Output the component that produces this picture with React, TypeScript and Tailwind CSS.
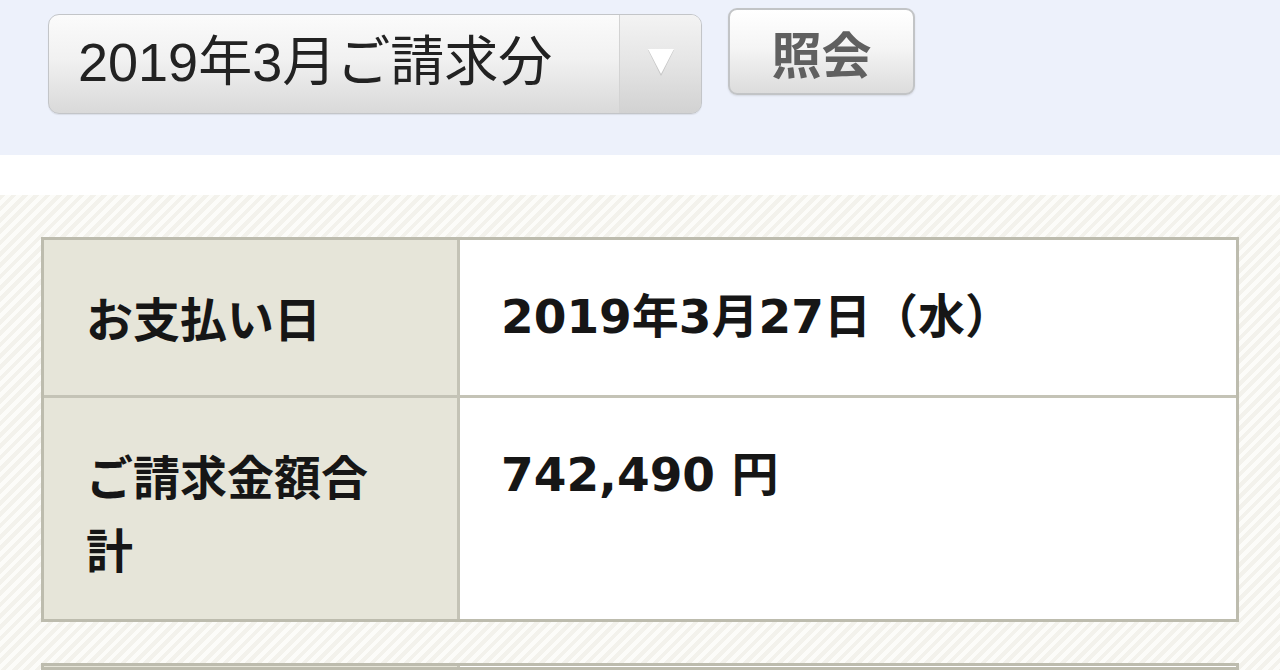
import React from "react";

const cjk = "font-['Noto_Sans_CJK_JP',sans-serif]";

function Row({
  label,
  value,
  last,
  pb,
}: {
  label: string;
  value: string;
  last?: boolean;
  pb: string;
}) {
  return (
    <div className={`flex ${last ? "" : "border-b-[3px] border-[#c4c3b6]"}`}>
      <div
        className={`w-[416px] shrink-0 bg-[#e6e5d9] border-r-[3px] border-[#c4c3b6] pl-[42px] pr-[70px] pt-[40px] ${pb}`}
      >
        <div
          className={`${cjk} font-bold text-[47px] leading-[73px] text-[#161616]`}
        >
          {label}
        </div>
      </div>
      <div className={`flex-1 bg-white pl-[41px] pt-[40px] ${pb}`}>
        <div className="font-['DejaVu_Sans','Noto_Sans_CJK_JP',sans-serif] font-bold text-[47px] leading-[73px] text-[#161616]">
          {value}
        </div>
      </div>
    </div>
  );
}

export default function App() {
  return (
    <div className="w-[1280px] h-[670px] overflow-hidden bg-white">
      {/* top bar */}
      <div className="h-[155px] bg-[#edf1fb] flex items-start pl-[48px] pt-[8px] gap-[26px]">
        <div className="mt-[6px] h-[100px] w-[654px] flex rounded-[11px] border border-[#c3c5c8] bg-[linear-gradient(#fbfbfb,#f1f1f1_45%,#d9d9d9)] shadow-[0_1px_1px_rgba(0,0,0,0.08)] overflow-hidden">
          <div className="flex-1 flex items-center pl-[29px] pb-[4px] font-['Liberation_Sans','Noto_Sans_CJK_JP',sans-serif] text-[54px] text-[#222]">
            2019年3月ご請求分
          </div>
          <div className="w-[82px] border-l border-[#d3d3d3] flex items-center justify-center pb-[6px] bg-[linear-gradient(#f3f3f3,#e6e6e6_45%,#d2d2d2)]">
            <svg width="32" height="32" viewBox="0 0 32 32">
              <polygon points="3,5 29,5 16,31" fill="#c4c4c4" />
              <polygon points="3,4 29,4 16,29" fill="#ffffff" />
            </svg>
          </div>
        </div>
        <button className="h-[87px] w-[187px] rounded-[9px] border-2 border-[#c2c4c6] bg-[linear-gradient(#ffffff,#f5f5f5_45%,#dcdcdc)] shadow-[0_1px_2px_rgba(0,0,0,0.1)] flex items-center justify-center">
          <span className={`${cjk} font-bold text-[50px] text-[#606060] leading-none`}>
            照会
          </span>
        </button>
      </div>
      <div className="h-[40px] bg-white" />
      {/* striped area */}
      <div className="h-[475px] px-[41px] pt-[42px] flex flex-col gap-[41px] bg-[repeating-linear-gradient(135deg,#f3f2ec_0px,#f3f2ec_4px,#fcfcf9_4px,#fcfcf9_8px)]">
        <div className="border-[3px] border-[#bdbcae] bg-white">
          <Row label="お支払い日" value="2019年3月27日（水）" pb="pb-[42px]" />
          <Row label="ご請求金額合計" value="742,490 円" last pb="pb-[35px]" />
        </div>
        <div className="border-[3px] border-[#bdbcae] bg-white flex h-[160px]">
          <div className="w-[416px] shrink-0 bg-[#e6e5d9] border-r-[3px] border-[#c4c3b6]" />
          <div className="flex-1 bg-white" />
        </div>
      </div>
    </div>
  );
}
